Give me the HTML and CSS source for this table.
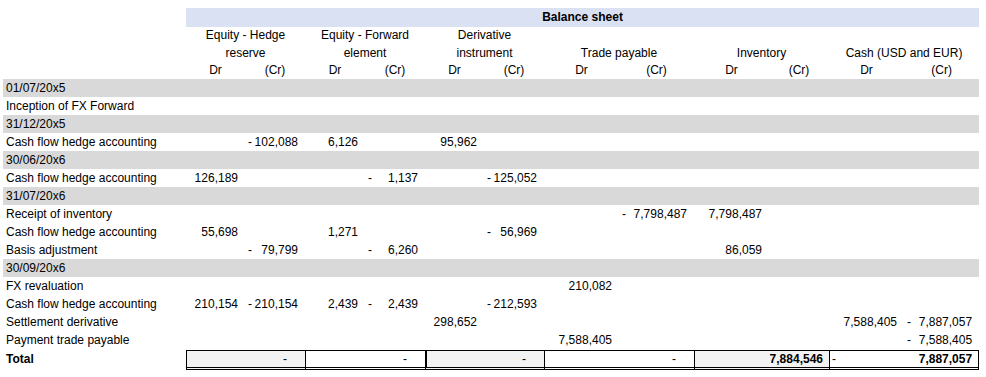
FILE: index.html
```html
<!DOCTYPE html>
<html>
<head>
<meta charset="utf-8">
<title>Balance sheet</title>
<link rel="stylesheet" href="styles.css">
</head>
<body>
<div class="sheet">
<table class="bs">
<colgroup>
<col class="c-label">
<col class="w59"><col class="w60"><col class="w60"><col class="w60"><col class="w59"><col class="w60">
<col class="w75"><col class="w75"><col class="w75"><col class="w60"><col class="w75"><col class="w75">
</colgroup>
<tr class="band"><td></td><td colspan="12" class="title">Balance sheet</td></tr>
<tr class="names"><td></td><td colspan="2">Equity - Hedge<br>reserve</td><td colspan="2">Equity - Forward<br>element</td><td colspan="2">Derivative<br>instrument</td><td colspan="2">Trade payable</td><td colspan="2">Inventory</td><td colspan="2">Cash (USD and EUR)</td></tr>
<tr class="drcr"><td></td><td>Dr</td><td>(Cr)</td><td>Dr</td><td>(Cr)</td><td>Dr</td><td>(Cr)</td><td>Dr</td><td>(Cr)</td><td>Dr</td><td>(Cr)</td><td>Dr</td><td>(Cr)</td></tr>

<tr class="row date"><td class="label">01/07/20x5</td><td colspan="12"></td></tr>
<tr class="row"><td class="label">Inception of FX Forward</td><td colspan="12"></td></tr>

<tr class="row date"><td class="label">31/12/20x5</td><td colspan="12"></td></tr>
<tr class="row"><td class="label">Cash flow hedge accounting</td>
<td class="num"></td><td class="num"><span class="sign">-</span>102,088</td>
<td class="num">6,126</td><td class="num"></td>
<td class="num">95,962</td><td class="num"></td>
<td class="num"></td><td class="num"></td>
<td class="num"></td><td class="num"></td>
<td class="num"></td><td class="num"></td></tr>

<tr class="row date"><td class="label">30/06/20x6</td><td colspan="12"></td></tr>
<tr class="row"><td class="label">Cash flow hedge accounting</td>
<td class="num">126,189</td><td class="num"></td>
<td class="num"></td><td class="num"><span class="sign">-</span>1,137</td>
<td class="num"></td><td class="num"><span class="sign">-</span>125,052</td>
<td class="num"></td><td class="num"></td>
<td class="num"></td><td class="num"></td>
<td class="num"></td><td class="num"></td></tr>

<tr class="row date"><td class="label">31/07/20x6</td><td colspan="12"></td></tr>
<tr class="row"><td class="label">Receipt of inventory</td>
<td class="num"></td><td class="num"></td>
<td class="num"></td><td class="num"></td>
<td class="num"></td><td class="num"></td>
<td class="num"></td><td class="num"><span class="sign">-</span>7,798,487</td>
<td class="num">7,798,487</td><td class="num"></td>
<td class="num"></td><td class="num"></td></tr>
<tr class="row"><td class="label">Cash flow hedge accounting</td>
<td class="num">55,698</td><td class="num"></td>
<td class="num">1,271</td><td class="num"></td>
<td class="num"></td><td class="num"><span class="sign">-</span>56,969</td>
<td class="num"></td><td class="num"></td>
<td class="num"></td><td class="num"></td>
<td class="num"></td><td class="num"></td></tr>
<tr class="row"><td class="label">Basis adjustment</td>
<td class="num"></td><td class="num"><span class="sign">-</span>79,799</td>
<td class="num"></td><td class="num"><span class="sign">-</span>6,260</td>
<td class="num"></td><td class="num"></td>
<td class="num"></td><td class="num"></td>
<td class="num">86,059</td><td class="num"></td>
<td class="num"></td><td class="num"></td></tr>

<tr class="row date"><td class="label">30/09/20x6</td><td colspan="12"></td></tr>
<tr class="row"><td class="label">FX revaluation</td>
<td class="num"></td><td class="num"></td>
<td class="num"></td><td class="num"></td>
<td class="num"></td><td class="num"></td>
<td class="num">210,082</td><td class="num"></td>
<td class="num"></td><td class="num"></td>
<td class="num"></td><td class="num"></td></tr>
<tr class="row"><td class="label">Cash flow hedge accounting</td>
<td class="num">210,154</td><td class="num"><span class="sign">-</span>210,154</td>
<td class="num">2,439</td><td class="num"><span class="sign">-</span>2,439</td>
<td class="num"></td><td class="num"><span class="sign">-</span>212,593</td>
<td class="num"></td><td class="num"></td>
<td class="num"></td><td class="num"></td>
<td class="num"></td><td class="num"></td></tr>
<tr class="row"><td class="label">Settlement derivative</td>
<td class="num"></td><td class="num"></td>
<td class="num"></td><td class="num"></td>
<td class="num">298,652</td><td class="num"></td>
<td class="num"></td><td class="num"></td>
<td class="num"></td><td class="num"></td>
<td class="num">7,588,405</td><td class="num"><span class="sign">-</span>7,887,057</td></tr>
<tr class="row last-row"><td class="label">Payment trade payable</td>
<td class="num"></td><td class="num"></td>
<td class="num"></td><td class="num"></td>
<td class="num"></td><td class="num"></td>
<td class="num">7,588,405</td><td class="num"></td>
<td class="num"></td><td class="num"></td>
<td class="num"></td><td class="num"><span class="sign">-</span>7,588,405</td></tr>

<tr class="total"><td class="label tlabel">Total</td>
<td colspan="2" class="tot shade zero">-</td>
<td colspan="2" class="tot zero">-</td>
<td colspan="2" class="tot shade thick zero">-</td>
<td colspan="2" class="tot zero">-</td>
<td colspan="2" class="tot shade amt">7,884,546</td>
<td colspan="2" class="tot amt end"><span class="tsign">-</span>7,887,057</td></tr>
</table>
</div>
</body>
</html>
```
FILE: styles.css
```css
html, body {
  margin: 0;
  padding: 0;
  background: #ffffff;
}
body {
  font-family: "Liberation Sans", Arial, sans-serif;
  font-size: 12px;
  color: #000000;
}
.sheet {
  padding: 8px 0 0 3px;
}
table.bs {
  border-collapse: separate;
  border-spacing: 0;
  table-layout: fixed;
  width: 976px;
}
.c-label { width: 183px; }
.w59 { width: 59px; }
.w60 { width: 60px; }
.w75 { width: 75px; }

.bs td {
  padding: 0;
  white-space: nowrap;
  overflow: hidden;
}

.band td {
  height: 19px;
  line-height: 19px;
}
.band .title {
  background: #d9e1f2;
  font-weight: bold;
  text-align: center;
}

.names td {
  height: 35px;
  line-height: 17.5px;
  vertical-align: bottom;
  text-align: center;
  white-space: normal;
}

.drcr td {
  height: 17px;
  line-height: 17px;
  text-align: center;
}

.row td {
  height: 18px;
  line-height: 18px;
}
.last-row td {
  height: 19px;
  line-height: 18px;
  vertical-align: top;
}
.date td {
  background: #d9d9d9;
}
.label {
  padding-left: 3px !important;
}
.num {
  text-align: right;
  padding: 0 7px 0 3px !important;
}
.sign {
  float: left;
}

.total td {
  height: 16px;
  line-height: 16px;
  vertical-align: top;
}
.tlabel {
  font-weight: bold;
  padding-top: 1px !important;
}
.tot {
  border-top: 1px solid #000000;
  border-left: 1px solid #000000;
  border-bottom: 3px double #000000;
  text-align: right;
}
.tot.thick {
  border-left-width: 2px;
}
.tot.end {
  border-right: 1px solid #000000;
}
.shade {
  background: #f2f2f2;
}
.zero {
  padding-right: 18px !important;
}
.amt {
  font-weight: bold;
  padding-right: 6px !important;
}
.tsign {
  float: left;
  font-weight: normal;
  padding-left: 2px;
}
```
